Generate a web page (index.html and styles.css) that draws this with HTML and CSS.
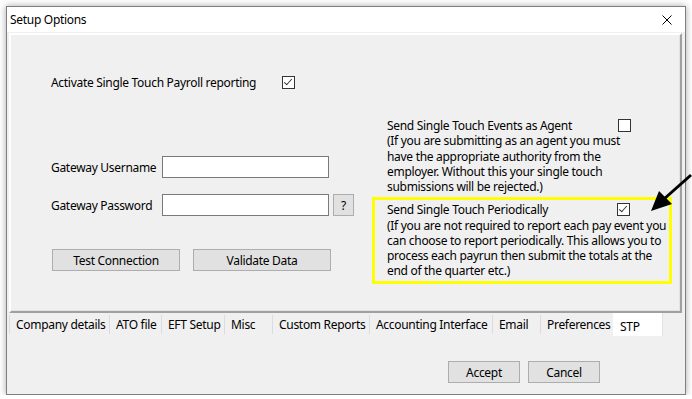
FILE: index.html
```html
<!DOCTYPE html>
<html lang="en">
<head>
  <meta charset="UTF-8">
  <title>Setup Options</title>
  <link rel="stylesheet" href="styles.css">
</head>
<body>

  <div class="window">
    <div class="titlebar">
      <span>Setup Options</span>
      <svg class="close" width="10" height="10" viewBox="0 0 10 10">
        <path d="M0.5 0.5 L9.5 9.5 M9.5 0.5 L0.5 9.5" stroke="#000" stroke-width="1" fill="none"/>
      </svg>
    </div>

    <div class="page">
      <div class="left">
        <div class="activate">
          <span class="activate-label">Activate Single Touch Payroll reporting</span>
          <span class="check on"></span>
        </div>

        <div class="field first">
          <label>Gateway Username</label>
          <input type="text">
        </div>

        <div class="field">
          <label>Gateway Password</label>
          <input type="password">
          <button class="help">?</button>
        </div>

        <div class="actions">
          <button class="btn test">Test Connection</button>
          <button class="btn validate">Validate Data</button>
        </div>
      </div>

      <div class="right">
        <div class="option agent">
          <div class="head">
            <span>Send Single Touch Events as Agent</span>
            <span class="check"></span>
          </div>
          <p>(If you are submitting as an agent you must<br>have the appropriate authority from the<br>employer. Without this your single touch<br>submissions will be rejected.)</p>
        </div>

        <div class="option periodic">
          <div class="head">
            <span>Send Single Touch Periodically</span>
            <span class="check on"></span>
          </div>
          <p>(If you are not required to report each pay event you<br>can choose to report periodically. This allows you to<br>process each payrun then submit the totals at the<br>end of the quarter etc.)</p>
        </div>
      </div>
    </div>

    <div class="tabs">
      <span class="tab t1">Company details</span>
      <span class="tab t2">ATO file</span>
      <span class="tab t3">EFT Setup</span>
      <span class="tab t4">Misc</span>
      <span class="tab t5">Custom Reports</span>
      <span class="tab t6">Accounting Interface</span>
      <span class="tab t7">Email</span>
      <span class="tab t8">Preferences</span>
      <span class="tab t9 active">STP</span>
    </div>

    <div class="footer">
      <button class="btn">Accept</button>
      <button class="btn">Cancel</button>
    </div>
  </div>

  <svg class="arrow" width="692" height="399" viewBox="0 0 692 399">
    <line x1="691" y1="175" x2="664" y2="199" stroke="#000" stroke-width="3"/>
    <polygon points="651,211 659,191 672,204" fill="#000"/>
  </svg>

</body>
</html>
```

FILE: styles.css
```css
body {
  margin: 0;
  background-color: #fff;
  font-family: "Noto Sans", "Open Sans", sans-serif;
  font-size: 12px;
  letter-spacing: -0.3px;
  color: #000;
  position: relative;
}
.window {
  margin: 6px 0 0 6px;
  width: 678px;
  height: 387px;
  border: 1px solid #7f7f7f;
  background-color: #f0f0f0;
  box-shadow: 0 0 7px rgba(0,0,0,0.35);
  display: flex;
  flex-direction: column;
}
.titlebar {
  height: 25px;
  background-color: #fff;
  display: flex;
  align-items: center;
  justify-content: space-between;
  padding: 0 13px 0 3px;
}
.close {
  display: block;
}
.page {
  margin: 1px 3px 0 2px;
  height: 276px;
  border-style: solid;
  border-width: 2px;
  border-color: #fff #a0a0a0 #a0a0a0 #fff;
  box-shadow: inset -1px -1px 0 #e3e3e3;
  display: flex;
}
.left {
  width: 321px;
  padding-left: 40px;
}
.activate {
  display: flex;
  align-items: center;
  height: 16px;
  margin-top: 39px;
}
.activate-label {
  width: 231px;
}
.check {
  display: inline-block;
  width: 11px;
  height: 11px;
  border: 1px solid #333;
  background-color: #fff;
  position: relative;
}
.check.on::after {
  content: "";
  position: absolute;
  left: 3px;
  top: 0px;
  width: 3px;
  height: 7px;
  border: solid #333;
  border-width: 0 1px 1px 0;
  transform: rotate(42deg);
}
.field {
  display: flex;
  align-items: center;
  height: 22px;
  margin-top: 16px;
}
.field.first {
  margin-top: 66px;
}
.field label {
  width: 111px;
}
.field input {
  box-sizing: border-box;
  width: 167px;
  height: 22px;
  padding: 0;
  border: 1px solid #7a7a7a;
  background-color: #fff;
  margin: 0;
}
button {
  font-family: inherit;
  font-size: 12px;
  letter-spacing: -0.3px;
  color: #000;
  background-color: #e1e1e1;
  border: 1px solid #adadad;
  padding: 0;
  margin: 0;
}
.help {
  width: 21px;
  height: 22px;
  margin-left: 4px;
}
.actions {
  display: flex;
  margin-top: 33px;
  gap: 13px;
}
.btn {
  height: 22px;
  width: 72px;
}
.btn.test {
  width: 128px;
  margin-left: 1px;
}
.btn.validate {
  width: 138px;
}
.right {
  width: 300px;
}
.option p {
  margin: 0;
  white-space: nowrap;
}
.head {
  display: flex;
  align-items: center;
  justify-content: space-between;
}
.agent {
  margin-top: 83px;
  padding-left: 15px;
  line-height: 15.25px;
}
.agent .head {
  width: 244px;
}
.periodic {
  margin-top: 3px;
  border: 3px solid #ffff00;
  padding: 2px 0 2px 12px;
  line-height: 15.25px;
}
.periodic .head {
  width: 243px;
}
.tabs {
  display: flex;
  height: 23px;
  margin-left: 2px;
}
.tab {
  box-sizing: border-box;
  padding: 1px 0 0 6px;
  border-left: 1px solid #dcdcdc;
  margin-top: 2px;
  height: 19px;
  white-space: nowrap;
}
.tab.active {
  background-color: #fff;
  border-left: none;
  margin-top: 0;
  height: 23px;
  padding: 5px 0 0 7px;
  border-right: 1px solid #e3e3e3;
}
.t1 { width: 100px; }
.t2 { width: 52px; }
.t3 { width: 63px; }
.t4 { width: 48px; }
.t5 { width: 97px; }
.t6 { width: 123px; }
.t7 { width: 48px; }
.t8 { width: 73px; }
.t9 { width: 50px; }
.footer {
  display: flex;
  justify-content: flex-end;
  gap: 8px;
  margin-top: 25px;
  padding-right: 85px;
}
.arrow {
  position: absolute;
  left: 0;
  top: 0;
  pointer-events: none;
}
```
